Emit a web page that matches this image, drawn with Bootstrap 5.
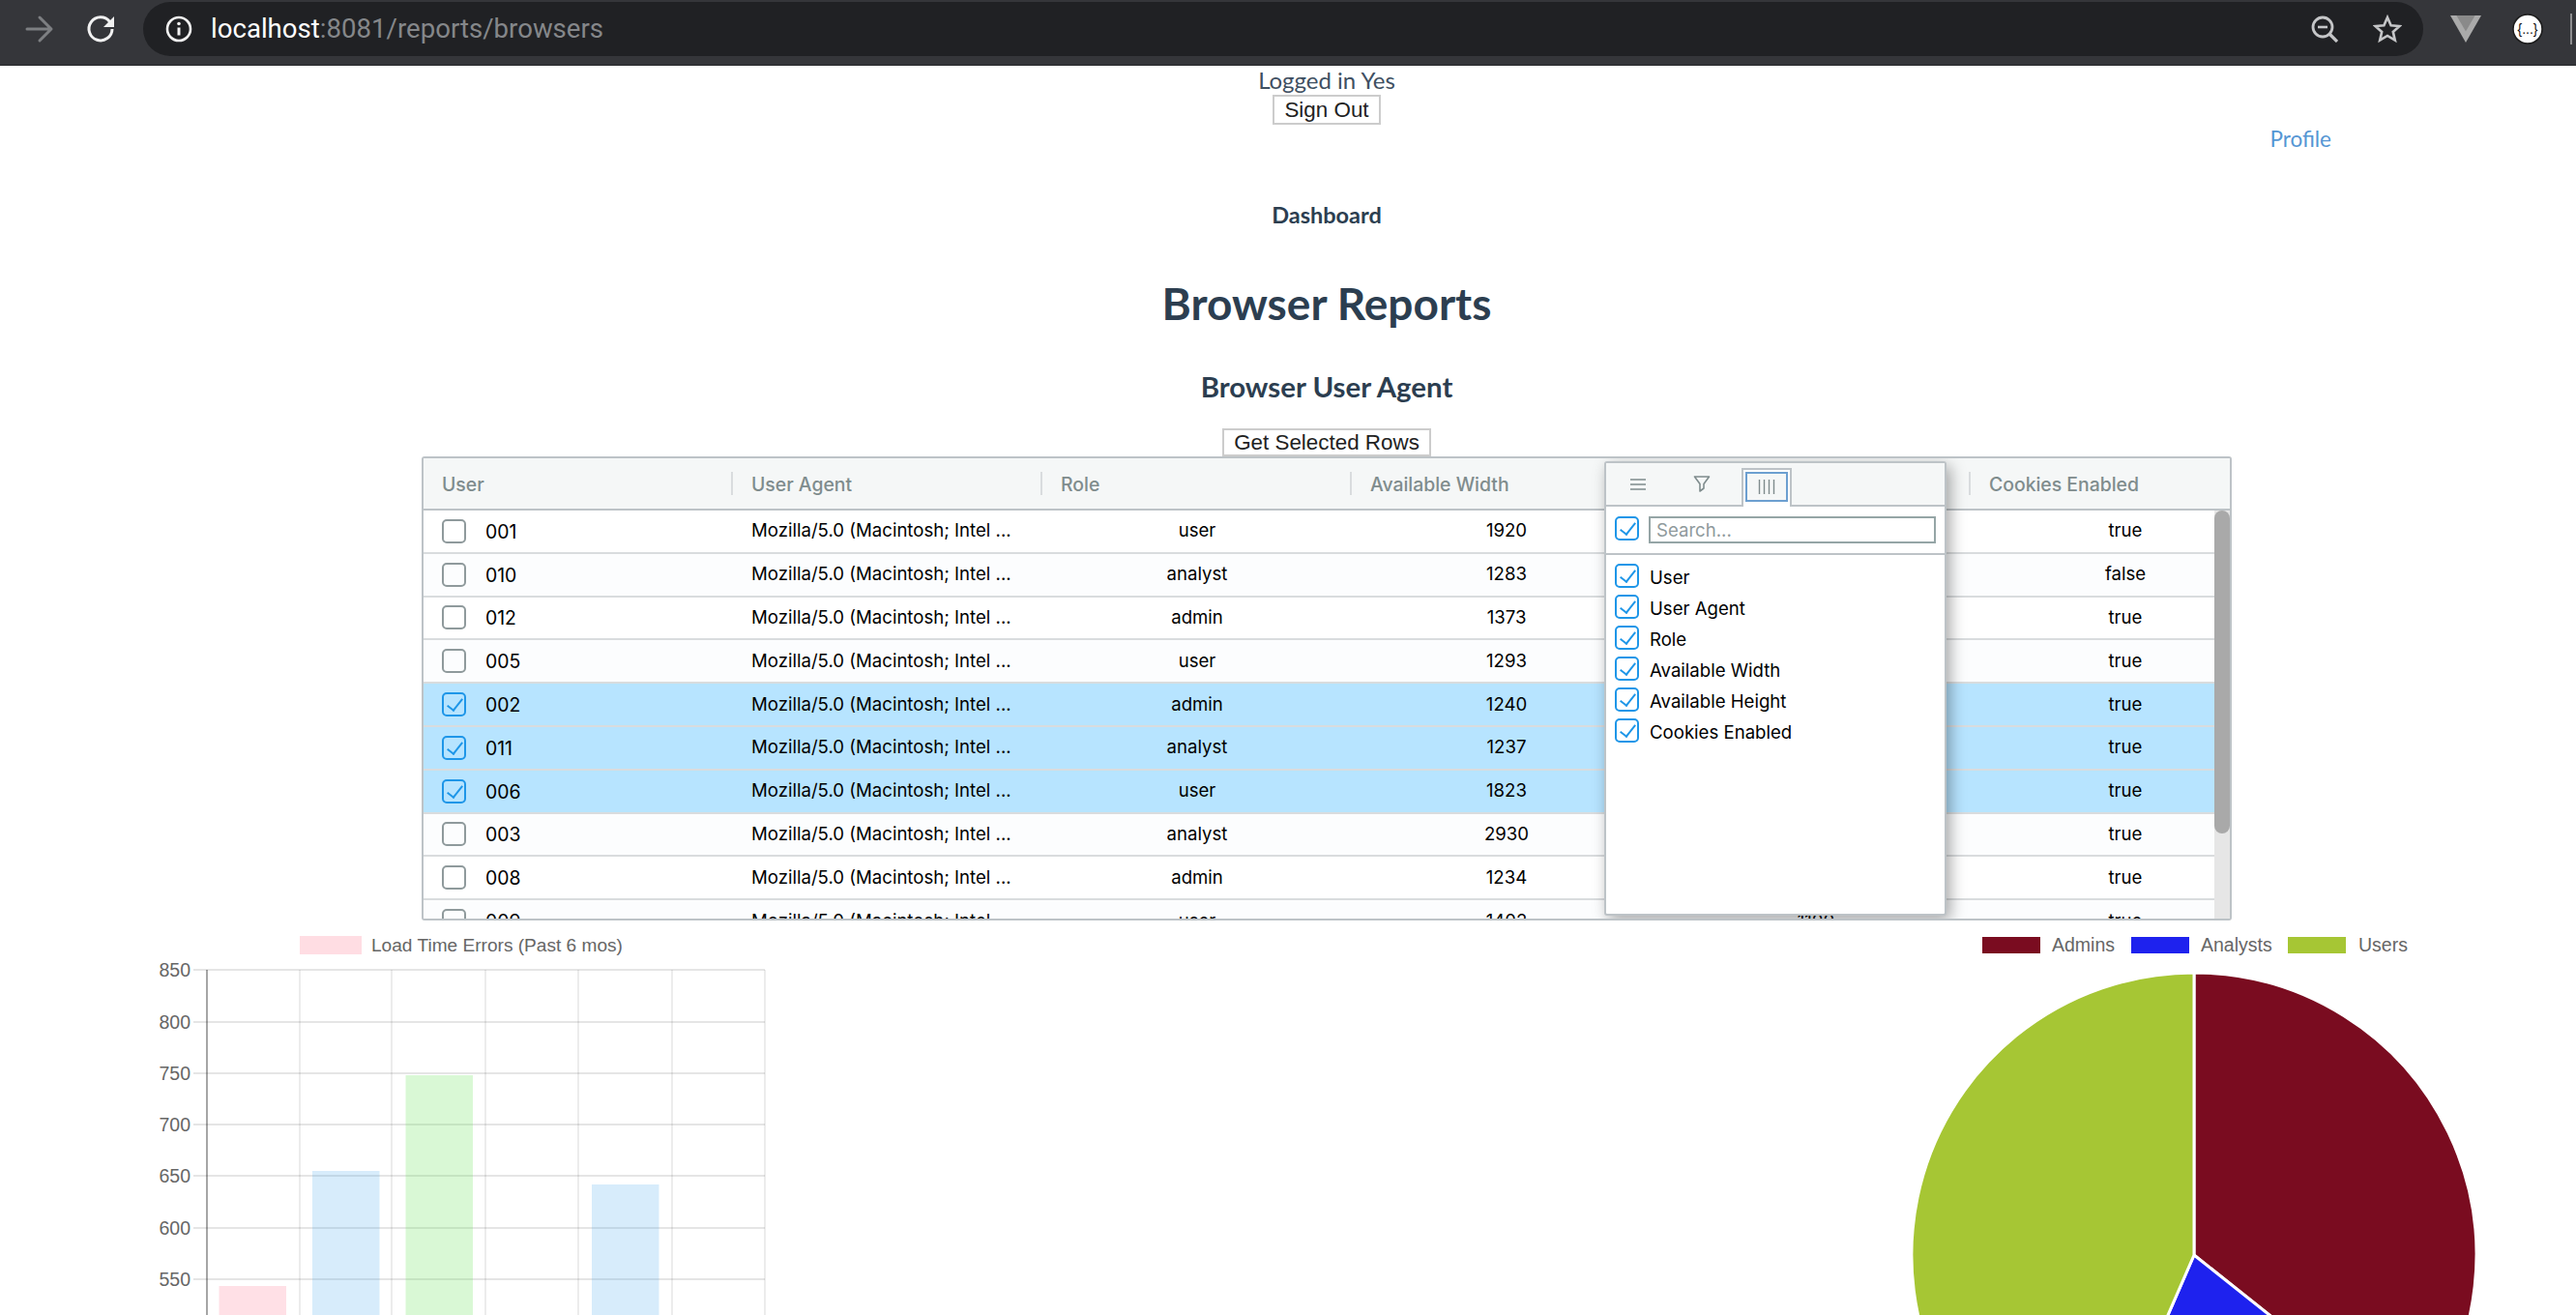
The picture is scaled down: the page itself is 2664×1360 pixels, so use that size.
<!DOCTYPE html>
<html lang="en">
<head>
  <meta charset="UTF-8">
  <title>Browser Reports</title>
  <link rel="stylesheet" href="https://cdn.jsdelivr.net/npm/bootstrap@5.3.0/dist/css/bootstrap.min.css">
  <style>
    html, body { height: 1360px; overflow: hidden; }
    body { font-family: "Lato", sans-serif; color: #2c3e50; background: #fff; }

    /* browser chrome */
    .chrome-bar { height: 68px; background: #35363a; border-bottom: 1px solid #27282b; padding-top: 2px; padding-bottom: 9px; }
    .chrome-nav { width: 148px; height: 56px; flex: none; }
    .chrome-pill { width: 2358px; height: 56px; background: #202124; border-radius: 28px; padding: 0 22px 0 23px; }
    .chrome-url { font-family: "Roboto", sans-serif; font-size: 27.6px; line-height: 56px; color: #85878a; margin-left: 19px; }
    .chrome-host { color: #fff; }
    .chrome-star { margin-left: 12px; }
    .chrome-tail { width: 158px; height: 56px; flex: none; }

    /* page header */
    .page-wrap { padding-left: 80px; }
    .login-line { font-size: 24px; line-height: 30px; color: #3f5062; }
    .plain-btn { font-family: "Liberation Sans", sans-serif; font-size: 22.4px; line-height: 25px; color: #222; background: #fff; border: 2px solid #ccc; padding: 1px 10px; display: block; margin: 0 auto; }
    .profile-row { padding-right: 253px; line-height: 30px; }
    .profile-link { font-size: 22.5px; color: #5596d4; text-decoration: none; }
    .dash-link { font-size: 23.5px; font-weight: 700; line-height: 30px; margin-top: 48px; color: #2c3e50; text-decoration: none; display: block; }
    .page-title { font-size: 46px; font-weight: 700; line-height: 58px; margin: 48px 0 0; color: #2c3e50; }
    .sub-title { font-size: 29.4px; font-weight: 700; line-height: 36px; margin: 39px 0 25px; color: #2c3e50; }
    .btn-rows { padding: 0 10px; margin-bottom: 0; }

    /* data grid */
    .data-grid { width: 1872px; height: 480px; margin: 0 auto; border: 2px solid #bdc3c7; border-radius: 3px; overflow: hidden; text-align: left; font-family: "Inter", sans-serif; font-size: 18.6px; color: #000; }
    .grid-head { height: 54px; background: #f5f7f7; border-bottom: 2px solid #bdc3c7; color: #7f8c8d; font-size: 19.4px; font-weight: 500; }
    .head-cell { width: 320px; padding-left: 19px; line-height: 54px; position: relative; flex: none; }
    .head-cell + .head-cell::before { content: ""; position: absolute; left: -2px; top: 14px; height: 24px; width: 2px; background: #d9dcde; }
    .grid-rows { width: 1852px; flex: none; }
    .grid-row { height: 44.8px; border-bottom: 2px solid #d9dcde; background: #fff; }
    .grid-row:nth-child(even) { background: #fcfdfe; }
    .grid-row.picked { background: #b7e4ff; }
    .data-cell { width: 320px; flex: none; padding: 0 19px; text-align: center; }
    .data-cell.lefty { text-align: left; }
    .id-cell { font-size: 19.4px; padding-top: 2px; }
    .scroll-track { width: 16px; flex: none; background: #e6e6e6; }
    .scroll-thumb { height: 334px; background: #a9a9a9; border-radius: 8px; }

    .tick-box { width: 25px; height: 25px; border: 2px solid #8f9a9c; border-radius: 5px; flex: none; position: relative; margin-right: 20px; }
    .tick-box.on { border-color: #1e96e8; }
    .tick-box.on::after { content: ""; position: absolute; left: 7px; top: 1px; width: 9px; height: 16px; border: solid #1e96e8; border-width: 0 2px 2px 0; transform: rotate(38deg); }

    /* columns panel */
    .col-panel { position: absolute; left: 1221px; top: 3px; width: 354px; height: 470px; background: #fff; border: 2px solid #bdc3c7; border-radius: 3px; box-shadow: 4px 5px 16px rgba(0, 0, 0, .35); }
    .panel-tabs { height: 45px; background: #f5f7f7; border-bottom: 2px solid #bdc3c7; }
    .panel-tab { width: 66px; height: 43px; }
    .panel-tab.live { width: 52px; height: 40px; margin-left: 8px; margin-top: 5px; background: #fff; border: 2px solid #bdc3c7; border-bottom: 0; padding: 2px; position: relative; }
    .live-box { height: 31px; background: #f5f7f7; border: 2px solid #6c9fd0; }
    .panel-search { height: 50px; border-bottom: 2px solid #bdc3c7; padding: 10px 0 0 9px; }
    .panel-search .tick-box { margin-right: 10px; }
    .panel-input { width: 297px; height: 28px; border: 2px solid #95a5a6; border-radius: 0; padding: 0 6px; font-size: 18.6px; color: #000; outline: 0; font-family: inherit; }
    .panel-input::placeholder { color: #8f9a9c; opacity: 1; }
    .panel-list { padding: 9px 0 0 9px; }
    .panel-item { height: 32px; }
    .panel-item .tick-box { margin-right: 11px; }
    .panel-item span:last-child { padding-top: 2px; line-height: 25px; }

    .chart-band { height: 408px; }
    .chart-band svg { display: block; }
    .chart-text { font-family: "Liberation Sans", sans-serif; font-size: 19.5px; fill: #666; }
    .chart-legend-wide { font-size: 19.1px; }
    .json-mark { font-family: "Liberation Sans", sans-serif; font-size: 14px; fill: #111; }
  </style>
</head>
<body>
  <!-- browser toolbar -->
  <div class="chrome-bar d-flex align-items-start">
    <div class="chrome-nav d-flex align-items-center">
      <svg width="148" height="56" viewBox="0 0 148 56">
        <path d="M28 28H52M41 16l12 12-12 12" fill="none" stroke="#7d7f82" stroke-width="3" stroke-linecap="round" stroke-linejoin="round"/>
        <path d="M113.5 20.5A12 12 0 1 0 116 28" fill="none" stroke="#f1f1f1" stroke-width="3"/>
        <path d="M118 15v11h-11z" fill="#f1f1f1"/>
      </svg>
    </div>
    <div class="chrome-pill d-flex align-items-center">
      <svg width="28" height="28" viewBox="0 0 28 28">
        <circle cx="14" cy="14" r="12" fill="none" stroke="#f1f1f1" stroke-width="2.6"/>
        <path d="M14 12.5v8" stroke="#f1f1f1" stroke-width="3"/>
        <circle cx="14" cy="8.5" r="1.8" fill="#f1f1f1"/>
      </svg>
      <span class="chrome-url flex-grow-1"><span class="chrome-host">localhost</span>:8081/reports/browsers</span>
      <svg width="28" height="28" viewBox="0 0 28 28" class="me-4">
        <circle cx="12" cy="12" r="10" fill="none" stroke="#c5c6c8" stroke-width="2.8"/>
        <path d="M7 12h10" stroke="#c5c6c8" stroke-width="2.6"/>
        <path d="M19 19l8 8" stroke="#c5c6c8" stroke-width="3.2"/>
      </svg>
      <svg width="30" height="30" viewBox="0 0 30 30" class="chrome-star">
        <path d="M15 3l3.6 8.2 8.9.8-6.7 5.9 2 8.7-7.8-4.6-7.8 4.6 2-8.7L2.5 12l8.9-.8z" fill="none" stroke="#c5c6c8" stroke-width="2.6"/>
      </svg>
    </div>
    <div class="chrome-tail d-flex align-items-center">
      <svg width="158" height="56" viewBox="0 0 158 56">
        <path d="M28 14h32L44 42z" fill="#aaa"/>
        <path d="M34.4 14h19.2L44 30.6z" fill="#8a8a8a"/>
        <circle cx="108" cy="28" r="15" fill="#fff" stroke="#1b1b1b" stroke-width="1.5"/>
        <text class="json-mark" x="108" y="33" text-anchor="middle">{...}</text>
        <path d="M153 12v32" stroke="#8d8d8f" stroke-width="2"/>
      </svg>
    </div>
  </div>

  <div class="page-wrap text-center">
    <div class="login-line">Logged in Yes</div>
    <button class="plain-btn" type="button">Sign Out</button>
    <div class="profile-row d-flex justify-content-end"><a class="profile-link" href="#">Profile</a></div>
    <a class="dash-link" href="#">Dashboard</a>
    <h1 class="page-title">Browser Reports</h1>
    <h2 class="sub-title">Browser User Agent</h2>
    <button class="plain-btn btn-rows" type="button">Get Selected Rows</button>

    <div class="data-grid position-relative">
      <div class="grid-head d-flex">
        <div class="head-cell">User</div>
        <div class="head-cell">User Agent</div>
        <div class="head-cell">Role</div>
        <div class="head-cell">Available Width</div>
        <div class="head-cell">Available Height</div>
        <div class="head-cell">Cookies Enabled</div>
      </div>
      <div class="d-flex">
        <div class="grid-rows">
          <div class="grid-row d-flex align-items-center"><div class="data-cell lefty d-flex align-items-center"><span class="tick-box"></span><span class="id-cell">001</span></div><div class="data-cell lefty">Mozilla/5.0 (Macintosh; Intel ...</div><div class="data-cell">user</div><div class="data-cell">1920</div><div class="data-cell">1080</div><div class="data-cell">true</div></div>
          <div class="grid-row d-flex align-items-center"><div class="data-cell lefty d-flex align-items-center"><span class="tick-box"></span><span class="id-cell">010</span></div><div class="data-cell lefty">Mozilla/5.0 (Macintosh; Intel ...</div><div class="data-cell">analyst</div><div class="data-cell">1283</div><div class="data-cell">1027</div><div class="data-cell">false</div></div>
          <div class="grid-row d-flex align-items-center"><div class="data-cell lefty d-flex align-items-center"><span class="tick-box"></span><span class="id-cell">012</span></div><div class="data-cell lefty">Mozilla/5.0 (Macintosh; Intel ...</div><div class="data-cell">admin</div><div class="data-cell">1373</div><div class="data-cell">1002</div><div class="data-cell">true</div></div>
          <div class="grid-row d-flex align-items-center"><div class="data-cell lefty d-flex align-items-center"><span class="tick-box"></span><span class="id-cell">005</span></div><div class="data-cell lefty">Mozilla/5.0 (Macintosh; Intel ...</div><div class="data-cell">user</div><div class="data-cell">1293</div><div class="data-cell">1048</div><div class="data-cell">true</div></div>
          <div class="grid-row picked d-flex align-items-center"><div class="data-cell lefty d-flex align-items-center"><span class="tick-box on"></span><span class="id-cell">002</span></div><div class="data-cell lefty">Mozilla/5.0 (Macintosh; Intel ...</div><div class="data-cell">admin</div><div class="data-cell">1240</div><div class="data-cell">1012</div><div class="data-cell">true</div></div>
          <div class="grid-row picked d-flex align-items-center"><div class="data-cell lefty d-flex align-items-center"><span class="tick-box on"></span><span class="id-cell">011</span></div><div class="data-cell lefty">Mozilla/5.0 (Macintosh; Intel ...</div><div class="data-cell">analyst</div><div class="data-cell">1237</div><div class="data-cell">1033</div><div class="data-cell">true</div></div>
          <div class="grid-row picked d-flex align-items-center"><div class="data-cell lefty d-flex align-items-center"><span class="tick-box on"></span><span class="id-cell">006</span></div><div class="data-cell lefty">Mozilla/5.0 (Macintosh; Intel ...</div><div class="data-cell">user</div><div class="data-cell">1823</div><div class="data-cell">1120</div><div class="data-cell">true</div></div>
          <div class="grid-row d-flex align-items-center"><div class="data-cell lefty d-flex align-items-center"><span class="tick-box"></span><span class="id-cell">003</span></div><div class="data-cell lefty">Mozilla/5.0 (Macintosh; Intel ...</div><div class="data-cell">analyst</div><div class="data-cell">2930</div><div class="data-cell">1600</div><div class="data-cell">true</div></div>
          <div class="grid-row d-flex align-items-center"><div class="data-cell lefty d-flex align-items-center"><span class="tick-box"></span><span class="id-cell">008</span></div><div class="data-cell lefty">Mozilla/5.0 (Macintosh; Intel ...</div><div class="data-cell">admin</div><div class="data-cell">1234</div><div class="data-cell">1006</div><div class="data-cell">true</div></div>
          <div class="grid-row d-flex align-items-center"><div class="data-cell lefty d-flex align-items-center"><span class="tick-box"></span><span class="id-cell">009</span></div><div class="data-cell lefty">Mozilla/5.0 (Macintosh; Intel ...</div><div class="data-cell">user</div><div class="data-cell">1402</div><div class="data-cell">1100</div><div class="data-cell">true</div></div>
        </div>
        <div class="scroll-track"><div class="scroll-thumb"></div></div>
      </div>

      <!-- column tool panel, open over the grid -->
      <div class="col-panel">
        <div class="panel-tabs d-flex">
          <div class="panel-tab d-flex align-items-center justify-content-center">
            <svg width="18" height="14" viewBox="0 0 18 14"><path d="M1 2h16M1 7h16M1 12h16" stroke="#7f8c8d" stroke-width="1.6"/></svg>
          </div>
          <div class="panel-tab d-flex align-items-center justify-content-center">
            <svg width="18" height="17" viewBox="0 0 18 17"><path d="M1.5 1h15L11 8.5V13l-4 3V8.5z" fill="none" stroke="#7f8c8d" stroke-width="1.6" stroke-linejoin="round"/></svg>
          </div>
          <div class="panel-tab live">
            <div class="live-box d-flex align-items-center justify-content-center">
              <svg width="18" height="15" viewBox="0 0 18 15"><path d="M1.5 0v15M6.5 0v15M11.5 0v15M16.5 0v15" stroke="#7f8c8d" stroke-width="1.4"/></svg>
            </div>
          </div>
        </div>
        <div class="panel-search d-flex">
          <span class="tick-box on"></span>
          <input class="panel-input" type="text" placeholder="Search...">
        </div>
        <div class="panel-list">
          <div class="panel-item d-flex"><span class="tick-box on"></span><span>User</span></div>
          <div class="panel-item d-flex"><span class="tick-box on"></span><span>User Agent</span></div>
          <div class="panel-item d-flex"><span class="tick-box on"></span><span>Role</span></div>
          <div class="panel-item d-flex"><span class="tick-box on"></span><span>Available Width</span></div>
          <div class="panel-item d-flex"><span class="tick-box on"></span><span>Available Height</span></div>
          <div class="panel-item d-flex"><span class="tick-box on"></span><span>Cookies Enabled</span></div>
        </div>
      </div>
    </div>
  </div>

  <div class="chart-band d-flex justify-content-between">
    <!-- bar chart, drawn in page coordinates -->
    <svg width="800" height="408" viewBox="0 952 800 408">
      <rect x="310" y="968" width="64" height="19" fill="#ffdde3"/>
      <text class="chart-text chart-legend-wide" x="384" y="984">Load Time Errors (Past 6 mos)</text>
      <g stroke="#000" stroke-opacity=".1" stroke-width="2">
        <path d="M200 1003H791M200 1057H791M200 1110H791M200 1163H791M200 1216H791M200 1270H791M200 1323H791"/>
        <path d="M310 1003V1360M405 1003V1360M502 1003V1360M598 1003V1360M695 1003V1360M791 1003V1360" stroke-width="1.5"/>
      </g>
      <path d="M214 1003V1360" stroke="#000" stroke-opacity=".35" stroke-width="2"/>
      <rect x="226.5" y="1330" width="69.5" height="30" fill="#ff6384" fill-opacity=".2"/>
      <rect x="323" y="1211" width="69.5" height="149" fill="#36a2eb" fill-opacity=".2"/>
      <rect x="419.5" y="1112" width="69.5" height="248" fill="#5be04a" fill-opacity=".23"/>
      <rect x="612" y="1225" width="69.5" height="135" fill="#36a2eb" fill-opacity=".2"/>
      <g text-anchor="end">
        <text class="chart-text" x="197" y="1010">850</text>
        <text class="chart-text" x="197" y="1064">800</text>
        <text class="chart-text" x="197" y="1117">750</text>
        <text class="chart-text" x="197" y="1170">700</text>
        <text class="chart-text" x="197" y="1223">650</text>
        <text class="chart-text" x="197" y="1277">600</text>
        <text class="chart-text" x="197" y="1330">550</text>
      </g>
    </svg>

    <!-- pie chart, drawn in page coordinates -->
    <svg width="800" height="408" viewBox="1864 952 800 408">
      <rect x="2050" y="969" width="60" height="17" fill="#7a0c20"/>
      <text class="chart-text" x="2122" y="984">Admins</text>
      <rect x="2204" y="969" width="60" height="17" fill="#1e22ee"/>
      <text class="chart-text" x="2276" y="984">Analysts</text>
      <rect x="2366" y="969" width="60" height="17" fill="#a6c634"/>
      <text class="chart-text" x="2439" y="984">Users</text>
      <g stroke="#fff" stroke-width="3" stroke-linejoin="round">
        <path d="M2269 1298V1006A292 292 0 0 1 2497.5 1479.8z" fill="#7a0c20"/>
        <path d="M2269 1298L2497.5 1479.8A292 292 0 0 1 2152.5 1565.8z" fill="#1e22ee"/>
        <path d="M2269 1298L2152.5 1565.8A292 292 0 0 1 2269 1006z" fill="#a6c634"/>
      </g>
    </svg>
  </div>

  <script src="https://cdn.jsdelivr.net/npm/bootstrap@5.3.0/dist/js/bootstrap.bundle.min.js"></script>
</body>
</html>
